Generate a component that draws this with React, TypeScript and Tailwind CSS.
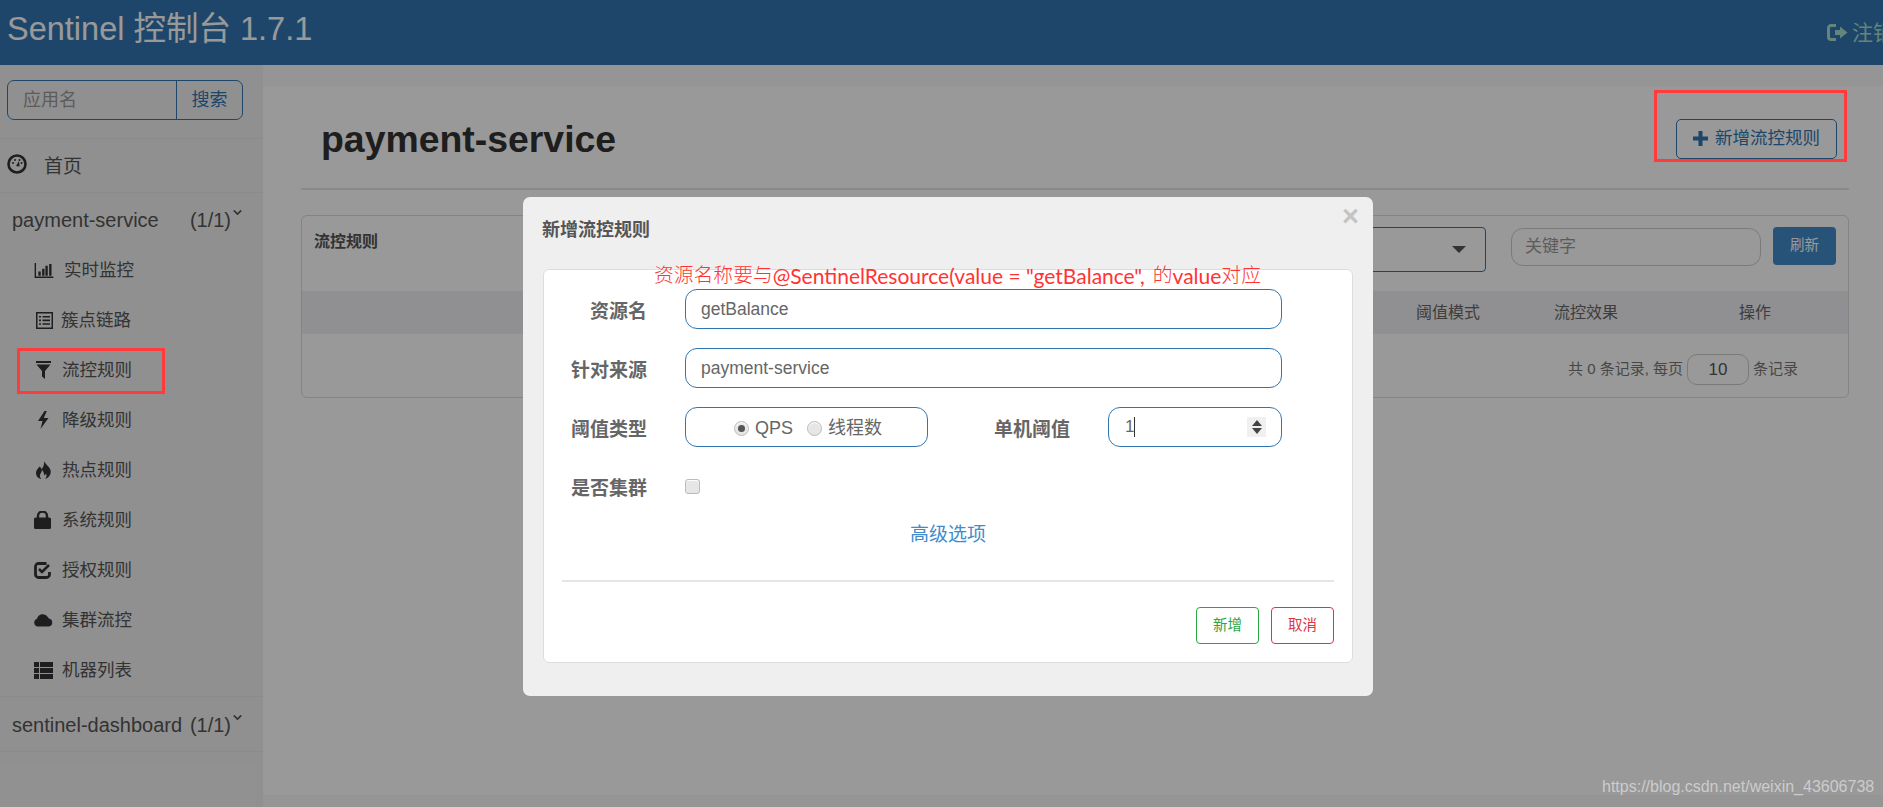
import { ChevronDown } from "lucide-react";
import type { ReactNode } from "react";

const font = "font-['Liberation_Sans','Noto_Sans_CJK_SC',sans-serif]";

function ChartIcon() {
  return (
    <svg viewBox="0 0 20 16" className="h-[15px] w-[20px] fill-current">
      <path d="M0 0h1.5v14.5H20V16H0z" />
      <path d="M4 9h2.5v4.5H4zM8 6h2.5v7.5H8zM11.5 3H14v10.5h-2.5zM15.5 1H18v12.5h-2.5z" />
    </svg>
  );
}

function GaugeIcon() {
  return (
    <svg viewBox="0 0 20 20" className="h-[20px] w-[20px]">
      <circle cx="10" cy="10" r="8.5" fill="none" stroke="currentColor" strokeWidth="2.6" />
      <circle cx="6" cy="9" r="1" fill="currentColor" />
      <circle cx="8" cy="6" r="1" fill="currentColor" />
      <circle cx="12.5" cy="6" r="1" fill="currentColor" />
      <circle cx="14.5" cy="9" r="1" fill="currentColor" />
      <path d="M9 12l3-5 0.6 5.4z" fill="currentColor" />
    </svg>
  );
}

function ListIcon() {
  return (
    <svg viewBox="0 0 17 17" className="h-[17px] w-[17px]">
      <rect x="0.75" y="0.75" width="15.5" height="15.5" fill="none" stroke="currentColor" strokeWidth="1.5" />
      <path
        d="M3 4h2v1.6H3zM6.5 4H14v1.6H6.5zM3 7.6h2v1.6H3zM6.5 7.6H14v1.6H6.5zM3 11.2h2v1.6H3zM6.5 11.2H14v1.6H6.5z"
        fill="currentColor"
      />
    </svg>
  );
}

function FunnelIcon() {
  return (
    <svg viewBox="0 0 15 18" className="h-[18px] w-[15px] fill-current">
      <path d="M0 0h15v2H0zM0.5 3.5h14L9 10v8l-3-2.5V10z" />
    </svg>
  );
}

function BoltIcon() {
  return (
    <svg viewBox="0 0 12 18" className="h-[18px] w-[12px] fill-current">
      <path d="M7.5 0L1 10h4.5L3.5 18 11.5 7H6.8L9.8 0z" />
    </svg>
  );
}

function FireIcon() {
  return (
    <svg viewBox="0 0 15 18" className="h-[18px] w-[15px] fill-current">
      <path d="M8 0c1 3 5 5 6.5 9 1 4-1.5 8-5.5 9 1.5-1.5 2-3.5 1-5.5-.5 1-1 1.5-2 2 .3-2-.5-4-2-5.5 0 2-1.5 3-2 5-.4 1.5.3 3 1.5 4C2 17.5 0 15 0 12c0-3 2-4.5 3.5-6.5C5 6.5 5.5 7.5 5.5 8.5 7.5 6 8.5 3 8 0z" />
    </svg>
  );
}

function LockIcon() {
  return (
    <svg viewBox="0 0 17 18" className="h-[18px] w-[17px]">
      <path d="M4 8V5a4.5 4.5 0 0 1 9 0v3" fill="none" stroke="currentColor" strokeWidth="2.4" />
      <rect x="0" y="6.5" width="17" height="11.5" rx="1.5" fill="currentColor" />
    </svg>
  );
}

function CheckIcon() {
  return (
    <svg viewBox="0 0 17 17" className="h-[17px] w-[17px]" fill="none" stroke="currentColor">
      <path d="M12.5 1.5H4.5a3 3 0 0 0-3 3v8a3 3 0 0 0 3 3h8a3 3 0 0 0 3-3v-2.5" strokeWidth="2.8" />
      <path d="M5 7l3 3 7-7" strokeWidth="2.6" />
    </svg>
  );
}

function CloudIcon() {
  return (
    <svg viewBox="0 0 19 14" className="h-[14px] w-[19px] fill-current">
      <path d="M4 13.5a4 4 0 0 1-1-7.8A6 6 0 0 1 13.8 4a3.2 3.2 0 0 1 1 1.4 4.1 4.1 0 0 1 0 8.1z" />
    </svg>
  );
}

function RowsIcon() {
  return (
    <svg viewBox="0 0 19 17" className="h-[17px] w-[19px] fill-current">
      <path d="M0 0h5v5H0zM6 0h13v5H6zM0 6h5v5H0zM6 6h13v5H6zM0 12h5v5H0zM6 12h13v5H6z" />
    </svg>
  );
}

function LogoutIcon() {
  return (
    <svg viewBox="0 0 21 17" className="h-[17px] w-[21px] shrink-0">
      <path d="M9 1.5H4A2.5 2.5 0 0 0 1.5 4v9A2.5 2.5 0 0 0 4 15.5h5" fill="none" stroke="currentColor" strokeWidth="3" />
      <path d="M8 6h5V2.5l7.5 6-7.5 6V11H8z" fill="currentColor" />
    </svg>
  );
}

function PlusIcon() {
  return (
    <svg viewBox="0 0 15 15" className="h-[15px] w-[15px] fill-current">
      <path d="M5.5 0h4v5.5H15v4H9.5V15h-4V9.5H0v-4h5.5z" />
    </svg>
  );
}

const subItems = [
  { label: "实时监控", icon: <ChartIcon />, box: "w-[30px]" },
  { label: "簇点链路", icon: <ListIcon />, box: "w-[27px] pl-[2px]" },
  { label: "流控规则", icon: <FunnelIcon />, box: "w-[28px] pl-[2px]" },
  { label: "降级规则", icon: <BoltIcon />, box: "w-[28px] pl-[3px]" },
  { label: "热点规则", icon: <FireIcon />, box: "w-[28px] pl-[2px]" },
  { label: "系统规则", icon: <LockIcon />, box: "w-[28px]" },
  { label: "授权规则", icon: <CheckIcon />, box: "w-[28px]" },
  { label: "集群流控", icon: <CloudIcon />, box: "w-[28px]" },
  { label: "机器列表", icon: <RowsIcon />, box: "w-[28px]" },
];

function AppRow({ name }: { name: string }) {
  return (
    <div className="flex h-[52px] items-center justify-between pl-3 pr-[32px] text-[20px] text-[#555555]">
      <span>{name}</span>
      <span className="relative">
        (1/1)
        <ChevronDown className="absolute top-[1px] -right-[13px] h-[13px] w-[13px]" strokeWidth={3} />
      </span>
    </div>
  );
}

function Sidebar() {
  return (
    <aside className="w-[263px] shrink-0 bg-[#f1f1f1]">
      <div className="flex h-[74px] items-start border-b border-[#e7e7e7] px-[7px] pt-[15px]">
        <div className="flex h-[40px] w-[236px] overflow-hidden rounded-[7px] border border-[#3276b1] text-[18px]">
          <span className="flex flex-1 items-center pl-[15px] text-[#999999]">应用名</span>
          <span className="flex w-[66px] items-center justify-center border-l border-[#3276b1] text-[#3276b1]">
            搜索
          </span>
        </div>
      </div>
      <div className="flex h-[54px] items-center border-b border-[#e7e7e7] pl-[7px] text-[19px] text-[#555555]">
        <span className="mb-[3px] w-[37px] text-[#333333]">
          <GaugeIcon />
        </span>
        <span className="mt-[3px]">首页</span>
      </div>
      <div className="pt-[1px]">
        <AppRow name="payment-service" />
      </div>
      <div className="-mt-[1px] border-b border-[#e7e7e7] pb-[1px]">
        {subItems.map((item) => (
          <div key={item.label} className="flex h-[50px] items-center pl-[34px] text-[17.5px] text-[#555555]">
            <span className={`flex items-center text-[#333333] ${item.box}`}>{item.icon}</span>
            <span>{item.label}</span>
          </div>
        ))}
      </div>
      <div className="border-b border-[#e7e7e7] pt-[2px]">
        <AppRow name="sentinel-dashboard" />
      </div>
    </aside>
  );
}

function RulesPanel() {
  return (
    <div className="mt-[25px] h-[183px] rounded-[6px] border border-[#dddddd]">
      <div className="flex h-[75px] items-start justify-between px-[12px] pt-[11px]">
        <span className="mt-[3px] text-[16px] font-bold text-[#555555]">流控规则</span>
        <div className="flex items-start">
          <div className="flex h-[45px] w-[300px] items-center justify-end rounded-[4px] border border-[#3276b1] pr-[19px]">
            <span className="h-0 w-0 border-x-[7px] border-t-[7px] border-x-transparent border-t-[#555555]" />
          </div>
          <div className="ml-[25px] mt-[1px] flex h-[38px] w-[250px] items-center rounded-[12px] border border-[#cccccc] pl-[13px] text-[17px] text-[#999999]">
            关键字
          </div>
          <div className="ml-[12px] flex h-[38px] w-[63px] items-center justify-center rounded-[4px] bg-[#428bca] text-[14.5px] text-white">
            刷新
          </div>
        </div>
      </div>
      <div className="flex h-[43px] items-center justify-end bg-[#f1f1f3] pr-[77px] text-[16px] text-[#666666]">
        <span>阈值模式</span>
        <span className="ml-[74px]">流控效果</span>
        <span className="ml-[121px]">操作</span>
      </div>
      <div className="flex items-center justify-end pr-[50px] pt-[20px] text-[15px] text-[#777777]">
        <span>共 0 条记录, 每页</span>
        <span className="mx-[4px] flex h-[31px] w-[62px] items-center justify-center rounded-[10px] border border-[#cccccc] text-[17px] text-[#555555]">
          10
        </span>
        <span>条记录</span>
      </div>
    </div>
  );
}

function Field({ label, children, width }: { label: string; children: ReactNode; width: string }) {
  return (
    <div className="flex h-[40px] items-center">
      <label className={`mt-[6px] text-right text-[19px] font-bold text-[#666666] ${width}`}>{label}</label>
      {children}
    </div>
  );
}

function Radio({ checked, label }: { checked?: boolean; label: string }) {
  return (
    <span className="flex items-center">
      <span className="flex h-[15px] w-[15px] items-center justify-center rounded-full border border-[#bbbbbb] bg-[#e6e6e6] shadow-[inset_0_1px_1px_#ffffff]">
        {checked && <span className="h-[7px] w-[7px] rounded-full bg-[#555555]" />}
      </span>
      <span className="ml-[6px] text-[18px] text-[#666666]">{label}</span>
    </span>
  );
}

function Modal() {
  const input = "ml-[38px] flex h-[40px] items-center rounded-[12px] border border-[#3276b1] text-[#666666]";
  return (
    <div className="absolute left-[523px] top-[197px] flex h-[499px] w-[850px] flex-col rounded-[7px] bg-[#efefef] px-[20px]">
      <div className="flex h-[72px] items-start justify-between">
        <h4 className="mt-[20px] -ml-[1px] text-[18px] font-bold text-[#555555]">新增流控规则</h4>
        <span className="mr-[-6px] mt-[5px] text-[29px] leading-[29px] font-bold text-[#c4c4c4]">×</span>
      </div>
      <div className="flex h-[394px] flex-col rounded-[6px] border border-[#dddddd] bg-white px-[18px]">
        <div className="flex flex-col gap-[19px] pt-[19px]">
          <Field label="资源名" width="w-[85px]">
            <div className={`${input} w-[597px] pl-[15px] text-[17.5px]`}>getBalance</div>
          </Field>
          <Field label="针对来源" width="w-[85px]">
            <div className={`${input} w-[597px] pl-[15px] text-[17.5px]`}>payment-service</div>
          </Field>
          <div className="flex items-center">
            <Field label="阈值类型" width="w-[85px]">
              <div className={`${input} w-[243px] pl-[48px]`}>
                <span className="mt-[3px] flex gap-[14px]">
                  <Radio checked label="QPS" />
                  <Radio label="线程数" />
                </span>
              </div>
            </Field>
            <div className="ml-[65px]">
              <Field label="单机阈值" width="w-[77px]">
                <div className={`${input} w-[174px] pl-[16px] text-[17px]`}>
                  <span className="-mt-[1px]">1</span>
                  <span className="-mt-[1px] h-[20px] w-px bg-[#333333]" />
                  <span className="-mt-[1px] ml-auto mr-[15px] flex h-[20px] w-[19px] flex-col items-center justify-center gap-[2px] bg-[#f0f0f0]">
                    <span className="h-0 w-0 border-x-[5px] border-b-[6px] border-x-transparent border-b-[#444444]" />
                    <span className="h-0 w-0 border-x-[5px] border-t-[6px] border-x-transparent border-t-[#444444]" />
                  </span>
                </div>
              </Field>
            </div>
          </div>
          <Field label="是否集群" width="w-[85px]">
            <span className="ml-[38px] h-[15px] w-[15px] rounded-[3px] border border-[#bbbbbb] bg-[#e6e6e6] shadow-[inset_0_1px_1px_#ffffff]" />
          </Field>
        </div>
        <div className="mt-[15px] h-[28px] shrink-0 text-center text-[19px] text-[#428bca]">高级选项</div>
        <div className="mt-[31px] h-[2px] shrink-0 bg-[#e5e5e5]" />
        <div className="mt-[25px] flex justify-end gap-[12px] text-[14.5px]">
          <span className="flex h-[37px] w-[63px] items-center justify-center rounded-[4px] border border-[#28a745] text-[#28a745]">
            新增
          </span>
          <span className="flex h-[37px] w-[63px] items-center justify-center rounded-[4px] border border-[#dc3545] text-[#dc3545]">
            取消
          </span>
        </div>
      </div>
    </div>
  );
}

export default function App() {
  return (
    <div className={`relative h-[807px] w-[1883px] overflow-hidden bg-[#f8f8f8] ${font}`}>
      <header className="flex h-[65px] items-center justify-between bg-[#3276b1] pl-[7px] text-white">
        <span className="mb-[7px] text-[32.5px]">Sentinel 控制台 1.7.1</span>
        <span className="flex w-[56px] items-center gap-[4px] overflow-hidden whitespace-nowrap text-[21px] text-[#a9dccb]">
          <LogoutIcon />
          注销
        </span>
      </header>
      <div className="flex h-[742px]">
        <Sidebar />
        <main className="mt-[21px] h-[709px] flex-1 bg-white pl-[38px] pr-[34px]">
          <div className="flex h-[104px] items-center justify-between border-b-2 border-[#e5e5e5] pr-[12px] pl-[20px]">
            <h1 className="mt-[5px] text-[37.4px] font-bold text-[#333333]">payment-service</h1>
            <button className="mt-[3px] flex h-[40px] w-[161px] items-center rounded-[5px] border border-[#3276b1] pl-[16px] text-[17.5px] text-[#3276b1]">
              <PlusIcon />
              <span className="ml-[7px]">新增流控规则</span>
            </button>
          </div>
          <RulesPanel />
        </main>
      </div>

      <div className="absolute inset-0 bg-black/40" />
      <Modal />

      {/* screenshot annotations drawn on top of the dialog */}
      <div className="absolute left-[17px] top-[348px] h-[46px] w-[148px] border-[3px] border-[#ff3b3b]" />
      <div className="absolute left-[1654px] top-[90px] h-[72px] w-[193px] border-[3px] border-[#ff3b3b]" />
      <div className="absolute left-[654px] top-[261px] flex h-[30px] items-center whitespace-nowrap text-[19.8px] text-[#ff3333]">
        <span className="font-light">资源名称要与</span>
        <span className="font-['Lato',sans-serif] text-[21px]">@SentinelResource(value = "getBalance",</span>
        <span className="ml-[8px] font-light">的</span>
        <span className="font-['Lato',sans-serif] text-[21px]">value</span>
        <span className="font-light">对应</span>
      </div>
      <span className="absolute left-[1602px] top-[775px] whitespace-nowrap text-[16px] text-[#cccccc]">
        https://blog.csdn.net/weixin_43606738
      </span>
    </div>
  );
}
